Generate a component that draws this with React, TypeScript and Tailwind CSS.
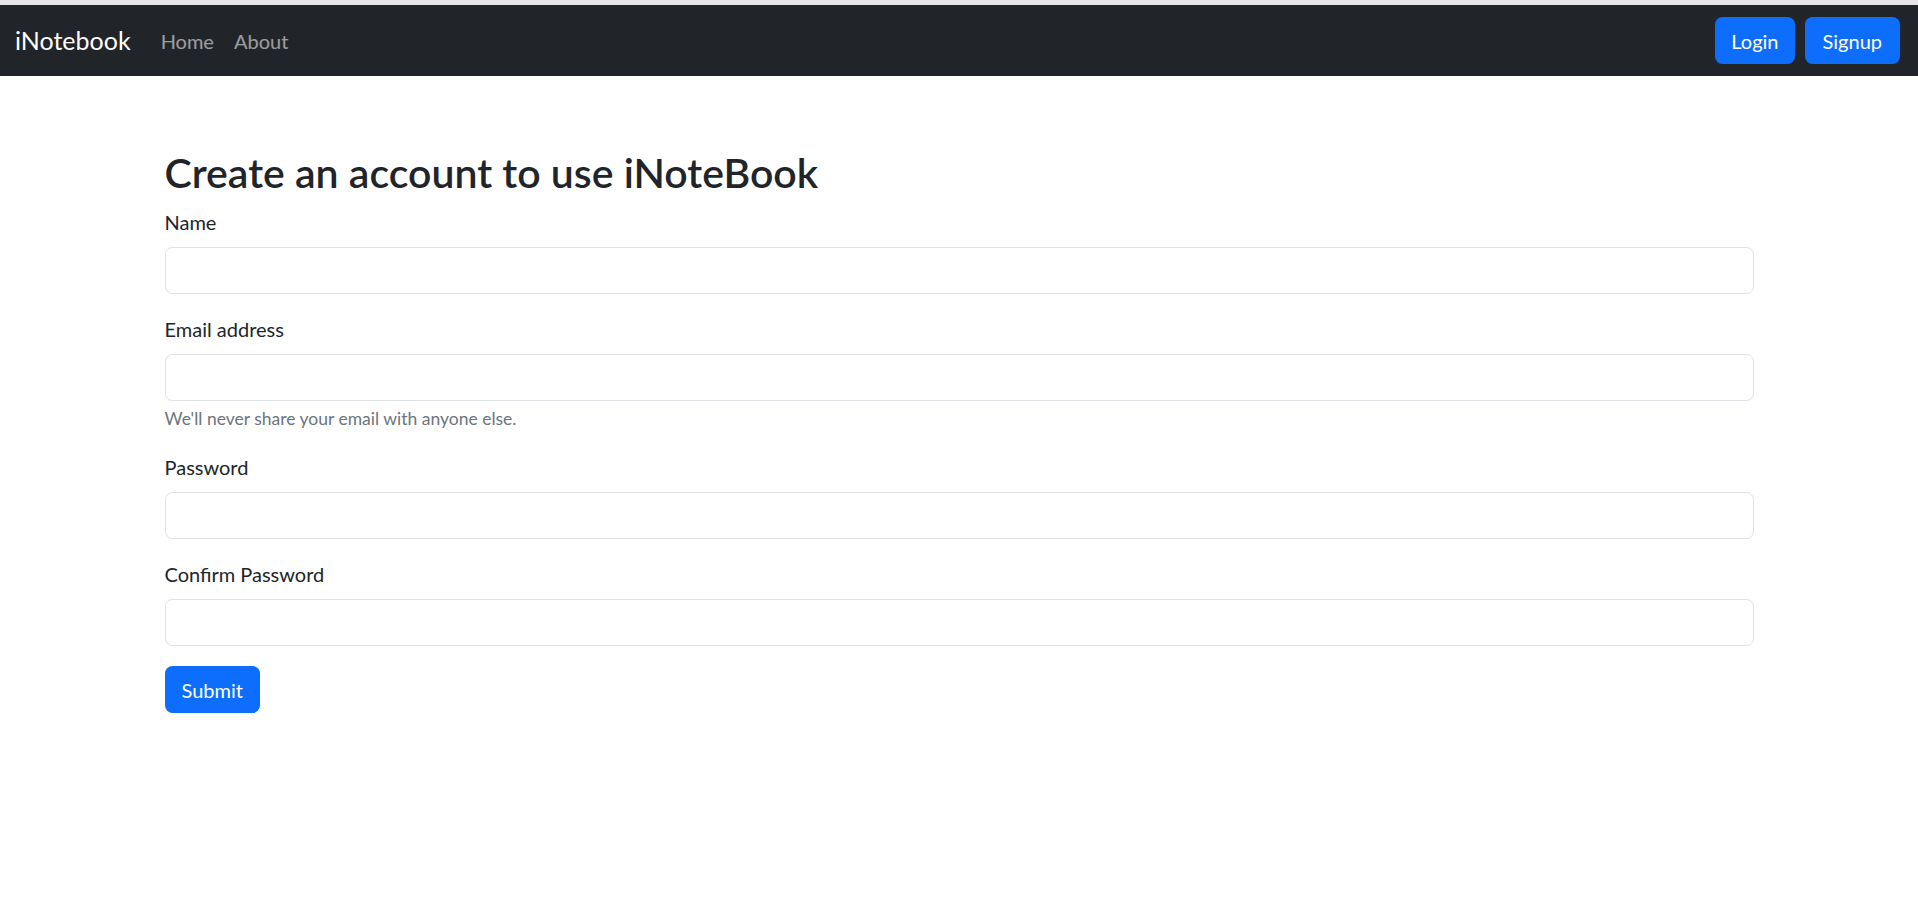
import React from "react";

const font = { fontFamily: '"Lato", "Liberation Sans", sans-serif' };

function Field({ label, type, help }: { label: string; type: string; help?: string }) {
  return (
    <div className="mb-[20px]">
      <label className="block text-[20px] leading-[30px] mb-[10px] text-[#212529]">{label}</label>
      <input
        type={type}
        className="block w-full h-[47px] rounded-[7.5px] border border-[#dee2e6] bg-white px-[15px] text-[20px] outline-none"
      />
      {help && <div className="mt-[5px] text-[17.5px] leading-[26px] text-[#6c757d]">{help}</div>}
    </div>
  );
}

export default function App() {
  return (
    <div className="min-h-[910px] bg-white" style={font}>
      <div className="h-[5px] bg-[#e5e5e5]" />
      <nav className="h-[71px] bg-[#212529] flex items-center px-[15px]">
        <a className="text-[25px] text-white mr-[20px] leading-none">iNotebook</a>
        <a className="px-[10px] text-[20px] text-white/55">Home</a>
        <a className="px-[10px] text-[20px] text-white/55">About</a>
        <div className="ml-auto flex gap-[10px] pr-[3px]">
          <button className="h-[47px] px-[16px] rounded-[7.5px] bg-[#0d6efd] text-white text-[20px]">Login</button>
          <button className="h-[47px] px-[18px] rounded-[7.5px] bg-[#0d6efd] text-white text-[20px]">Signup</button>
        </div>
      </nav>
      <div className="w-[1589px] mx-auto pt-[73px]">
        <h1 className="text-[41px] leading-[48px] font-semibold text-[#212529] mb-[10px]">Create an account to use iNoteBook</h1>
        <form>
          <Field label="Name" type="text" />
          <Field label="Email address" type="email" help="We'll never share your email with anyone else." />
          <Field label="Password" type="password" />
          <Field label="Confirm Password" type="password" />
          <button type="button" className="h-[47px] px-[17px] rounded-[7.5px] bg-[#0d6efd] text-white text-[20px]">Submit</button>
        </form>
      </div>
    </div>
  );
}
